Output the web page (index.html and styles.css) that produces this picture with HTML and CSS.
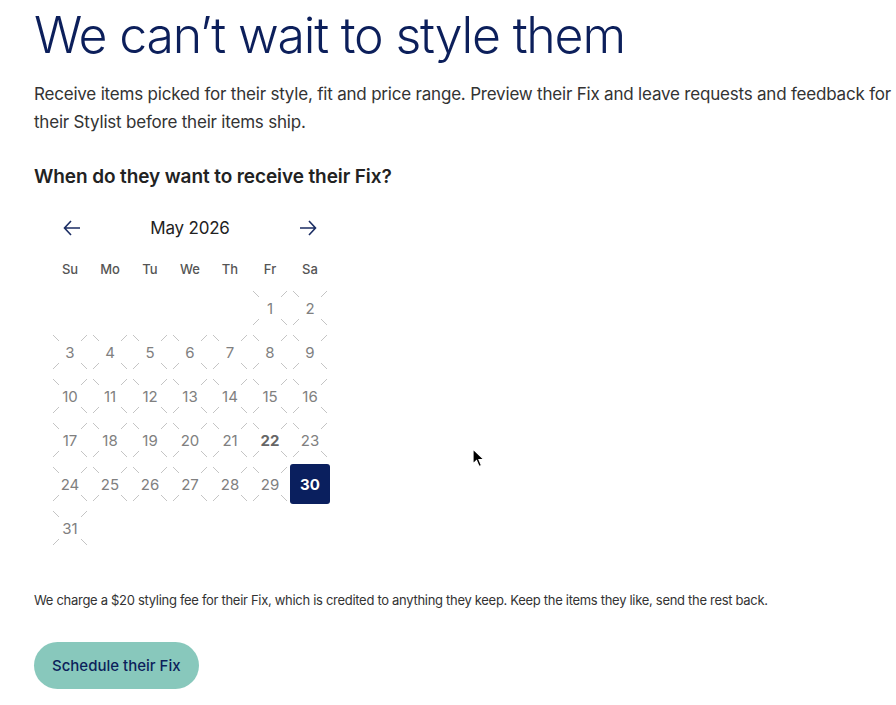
FILE: index.html
```html
<!DOCTYPE html>
<html lang="en">
<head>
  <meta charset="UTF-8" />
  <meta name="viewport" content="width=device-width, initial-scale=1" />
  <title>Schedule their Fix</title>
  <link rel="stylesheet" href="styles.css">
</head>
<body>
  <main class="page">
    <h1 class="title">We can’t wait to style them</h1>
    <p class="intro">Receive items picked for their style, fit and price range. Preview their Fix and leave requests and feedback for their Stylist before their items ship.</p>

    <h2 class="question">When do they want to receive their Fix?</h2>

    <div class="calendar">
      <div class="cal-head">
        <button class="cal-nav" aria-label="Previous month">
          <svg width="18" height="16" viewBox="0 0 18 16"><path d="M17 8H1.5M8 1L1.5 8L8 15" fill="none" stroke="#1b2d63" stroke-width="1.6"/></svg>
        </button>
        <div class="cal-month">May 2026</div>
        <button class="cal-nav" aria-label="Next month">
          <svg width="18" height="16" viewBox="0 0 18 16"><path d="M1 8H16.5M10 1L16.5 8L10 15" fill="none" stroke="#1b2d63" stroke-width="1.6"/></svg>
        </button>
      </div>

      <div class="cal-grid">
        <div class="wd">Su</div><div class="wd">Mo</div><div class="wd">Tu</div><div class="wd">We</div><div class="wd">Th</div><div class="wd">Fr</div><div class="wd">Sa</div>

        <div class="blank"></div><div class="blank"></div><div class="blank"></div><div class="blank"></div><div class="blank"></div>
        <div class="day">1</div><div class="day">2</div>

        <div class="day">3</div><div class="day">4</div><div class="day">5</div><div class="day">6</div><div class="day">7</div><div class="day">8</div><div class="day">9</div>
        <div class="day">10</div><div class="day">11</div><div class="day">12</div><div class="day">13</div><div class="day">14</div><div class="day">15</div><div class="day">16</div>
        <div class="day">17</div><div class="day">18</div><div class="day">19</div><div class="day">20</div><div class="day">21</div><div class="day today">22</div><div class="day">23</div>
        <div class="day">24</div><div class="day">25</div><div class="day">26</div><div class="day">27</div><div class="day">28</div><div class="day">29</div><div class="day selected">30</div>
        <div class="day">31</div>
      </div>
    </div>

    <p class="fee">We charge a $20 styling fee for their Fix, which is credited to anything they keep. Keep the items they like, send the rest back.</p>

    <button class="cta">Schedule their Fix</button>
  </main>

  <svg class="cursor" width="14" height="20" viewBox="0 0 14 20">
    <path d="M1 1L1 16L4.5 12.5L7 18.5L9.5 17.5L7 11.5L12 11.5Z" fill="#000" stroke="#fff" stroke-width="1.2"/>
  </svg>
</body>
</html>
```

FILE: styles.css
```css
body {
  margin: 0;
  background: #fff;
  font-family: Inter, 'Noto Sans', sans-serif;
  color: #333;
  position: relative;
  min-height: 705px;
  overflow: hidden;
}

.page {
  padding: 0 0 0 34px;
}

.title {
  margin: 0;
  padding-top: 4px;
  font-size: 50px;
  line-height: 62px;
  font-weight: 300;
  color: #0c1f5b;
  letter-spacing: -1.2px;
}

.intro {
  margin: 14px 0 0;
  font-size: 17px;
  line-height: 28px;
  color: #333;
  letter-spacing: -0.2px;
  max-width: 860px;
}

.question {
  margin: 27px 0 0;
  font-size: 19px;
  line-height: 28px;
  font-weight: 600;
  color: #222;
  letter-spacing: -0.1px;
}

.calendar {
  margin: 22px 0 0 16px;
  width: 280px;
}

.cal-head {
  display: flex;
  align-items: center;
  justify-content: space-between;
  height: 30px;
  padding: 0 12px;
}

.cal-nav {
  border: none;
  background: none;
  padding: 0;
  width: 20px;
  height: 20px;
  display: flex;
  align-items: center;
  justify-content: center;
  cursor: pointer;
}

.cal-month {
  font-size: 17px;
  color: #222;
  letter-spacing: -0.2px;
}

.cal-grid {
  display: grid;
  grid-template-columns: repeat(7, 40px);
  grid-template-rows: 30px;
  grid-auto-rows: 40px;
  row-gap: 4px;
  margin-top: 11px;
}

.wd {
  display: flex;
  align-items: center;
  justify-content: center;
  font-size: 13px;
  color: #555;
  font-weight: 500;
}

.day {
  display: flex;
  align-items: center;
  justify-content: center;
  font-size: 15px;
  color: #808080;
  background:
    radial-gradient(circle at center, #fff 15px, transparent 15.5px),
    linear-gradient(45deg, transparent calc(50% - 0.6px), #c4c4c4 50%, transparent calc(50% + 0.6px)),
    linear-gradient(-45deg, transparent calc(50% - 0.6px), #c4c4c4 50%, transparent calc(50% + 0.6px));
  background-size: 100% 100%, 34px 36px, 34px 36px;
  background-position: center;
  background-repeat: no-repeat;
}

.day.today {
  font-weight: 700;
  color: #666;
}

.day.selected {
  background: #0a1f5e;
  color: #fff;
  font-weight: 700;
  border-radius: 3px;
}

.fee {
  margin: 43px 0 0;
  font-size: 13px;
  line-height: 18px;
  color: #333;
  letter-spacing: -0.3px;
}

.cta {
  margin-top: 33px;
  border: none;
  background: #88c8bc;
  color: #0c1f5b;
  font-family: inherit;
  font-size: 15px;
  font-weight: 500;
  height: 47px;
  padding: 0 18px;
  border-radius: 24px;
  cursor: pointer;
}

.cursor {
  position: absolute;
  left: 472px;
  top: 448px;
}
```
